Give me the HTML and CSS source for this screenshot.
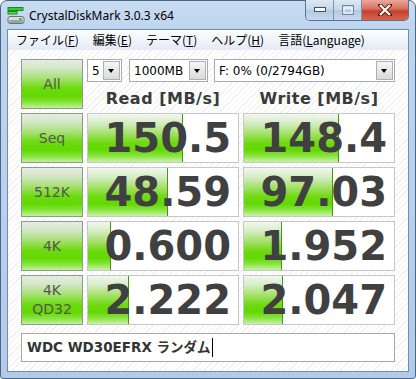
FILE: index.html
```html
<!DOCTYPE html>
<html lang="ja">
<head>
  <meta charset="UTF-8">
  <title>CrystalDiskMark 3.0.3 x64</title>
  <link rel="stylesheet" href="styles.css">
</head>
<body>
  <div class="window">

    <!-- Title bar -->
    <div class="titlebar">
      <svg class="app-icon" width="18" height="18" viewBox="0 0 18 18">
        <rect x="1" y="0.5" width="15" height="3" fill="#3cc83c" stroke="#1e8a1e" stroke-width="1"/>
        <rect x="1" y="4.5" width="9" height="2.5" fill="#58d858" stroke="#1e8a1e" stroke-width="1"/>
        <rect x="1" y="9.5" width="16" height="7" rx="2" fill="#d8dcde" stroke="#6a7378" stroke-width="1"/>
        <rect x="2" y="13" width="14" height="3" rx="1" fill="#9aa3a8"/>
        <rect x="12" y="11" width="3" height="2" fill="#3ad03a"/>
      </svg>
      <div class="title">CrystalDiskMark 3.0.3 x64</div>
      <div class="caption-btns">
        <div class="cap-btn">
          <svg width="12" height="6" viewBox="0 0 12 6"><rect x="0.5" y="0.5" width="11" height="4" fill="#fff" stroke="#39506e"/></svg>
        </div>
        <div class="cap-btn">
          <svg width="12" height="10" viewBox="0 0 12 10"><rect x="0.5" y="0.5" width="11" height="9" fill="none" stroke="#6f87a3"/><rect x="2" y="3" width="8" height="5" fill="none" stroke="#fff"/></svg>
        </div>
        <div class="cap-btn close">
          <svg width="14" height="12" viewBox="0 0 14 12"><path d="M2 1 L12 11 M12 1 L2 11" stroke="#5a1a12" stroke-width="4" stroke-linecap="square"/><path d="M2 1 L12 11 M12 1 L2 11" stroke="#fff" stroke-width="2.2"/></svg>
        </div>
      </div>
    </div>

    <div class="client">
      <!-- Menu -->
      <div class="menu">
        <span class="menu-item">ファイル(<u>F</u>)</span>
        <span class="menu-item">編集(<u>E</u>)</span>
        <span class="menu-item">テーマ(<u>T</u>)</span>
        <span class="menu-item">ヘルプ(<u>H</u>)</span>
        <span class="menu-item">言語(<u>L</u>anguage)</span>
      </div>

      <div class="content">
        <div class="grid">
          <div class="btn">All</div>
          <div class="top">
            <div class="combos">
              <div class="combo w-count"><span>5</span><i class="arrow"></i></div>
              <div class="combo w-size"><span>1000MB</span><i class="arrow"></i></div>
              <div class="combo w-drive"><span>F: 0% (0/2794GB)</span><i class="arrow"></i></div>
            </div>
            <div class="heads">
              <div class="head">Read [MB/s]</div>
              <div class="head">Write [MB/s]</div>
            </div>
          </div>

          <div class="btn">Seq</div>
          <div class="val"><div class="bar" style="width:63%"></div><span>150.5</span></div>
          <div class="val"><div class="bar" style="width:63%"></div><span>148.4</span></div>

          <div class="btn">512K</div>
          <div class="val"><div class="bar" style="width:53%"></div><span>48.59</span></div>
          <div class="val"><div class="bar" style="width:59%"></div><span>97.03</span></div>

          <div class="btn">4K</div>
          <div class="val"><div class="bar" style="width:15%"></div><span>0.600</span></div>
          <div class="val"><div class="bar" style="width:25%"></div><span>1.952</span></div>

          <div class="btn two-line">4K<br>QD32</div>
          <div class="val"><div class="bar" style="width:27%"></div><span>2.222</span></div>
          <div class="val"><div class="bar" style="width:26%"></div><span>2.047</span></div>
        </div>

        <div class="comment">WDC WD30EFRX ランダム<span class="caret"></span></div>
      </div>
    </div>

  </div>
</body>
</html>
```

FILE: styles.css
```css
* {
  box-sizing: border-box;
}

body {
  margin: 0;
  background: #fff;
  font-family: "DejaVu Sans", "Noto Sans CJK JP", sans-serif;
}

.window {
  width: 416px;
  height: 379px;
  border: 1px solid #4a6788;
  border-radius: 7px 7px 3px 3px;
  background: linear-gradient(to bottom, #c9ddf1 0, #bed5ee 28px, #b2cbe8 100%);
  padding: 0 6px 6px;
  display: flex;
  flex-direction: column;
}

/* Title bar */
.titlebar {
  height: 28px;
  display: flex;
  align-items: flex-start;
}

.app-icon {
  margin-top: 6px;
}

.title {
  margin: 7px 0 0 4px;
  font-family: "Noto Sans", sans-serif;
  font-size: 12px;
  line-height: 16px;
  color: #000;
}

.caption-btns {
  margin-left: auto;
  margin-top: -1px;
  display: flex;
  border: 1px solid #5a7392;
  border-top: none;
  border-radius: 0 0 5px 5px;
  overflow: hidden;
}

.cap-btn {
  width: 28px;
  height: 20px;
  display: flex;
  align-items: center;
  justify-content: center;
  background: linear-gradient(to bottom, #dce7f3 0, #c5d6ea 50%, #b4c8e0 51%, #c7d9ed 100%);
  border-right: 1px solid #7a92b0;
}

.cap-btn.close {
  width: 46px;
  border-right: none;
  background: linear-gradient(to bottom, #e9a99c 0, #d8705e 45%, #c5402c 55%, #d4664c 100%);
}

/* Client area */
.client {
  flex: 1;
  border: 1px solid #6f8db3;
  background: repeating-linear-gradient(135deg, #fff 0 3px, #f1f1f1 3px 4px);
  display: flex;
  flex-direction: column;
}

.menu {
  height: 20px;
  display: flex;
  padding-left: 1px;
  background: linear-gradient(to bottom, #fbfcfe 0, #eef3f9 60%, #e2eaf4 100%);
  font-family: "Noto Sans CJK JP", sans-serif;
  font-size: 12px;
  line-height: 20px;
  color: #000;
}

.menu-item {
  padding: 0 7px;
}

.content {
  padding: 9px 0 0 13px;
}

.grid {
  display: grid;
  grid-template-columns: 62px 152px 152px;
  grid-auto-rows: 50px;
  gap: 4px;
}

.btn {
  border: 1px solid #8e9a8e;
  background: linear-gradient(to bottom, #e6ece2 0, #d2e6c4 18%, #a2e06a 40%, #6fda12 58%, #62d800 75%, #86e43c 88%, #c2f09c 100%);
  display: flex;
  align-items: center;
  justify-content: center;
  text-align: center;
  font-size: 14px;
  color: #555;
}

.btn.two-line {
  line-height: 19px;
}

.top {
  grid-column: 2 / 4;
  display: flex;
  flex-direction: column;
  justify-content: space-between;
}

.combos {
  display: flex;
  gap: 7px;
}

.combo {
  height: 23px;
  border: 1px solid #a4abb4;
  background: #fff;
  display: flex;
  align-items: center;
  justify-content: space-between;
  font-size: 12px;
  color: #000;
  padding: 0 1px 0 4px;
}

.w-count { width: 35px; }
.w-size { width: 79px; }
.w-drive { width: 181px; margin-left: -1px; }

.arrow {
  width: 17px;
  height: 19px;
  border: 1px solid #b0b0b0;
  background: linear-gradient(to bottom, #f6f6f6, #dadada);
  position: relative;
}

.arrow::after {
  content: "";
  position: absolute;
  left: 4px;
  top: 7px;
  border-left: 3.5px solid transparent;
  border-right: 3.5px solid transparent;
  border-top: 4px solid #000;
}

.heads {
  display: grid;
  grid-template-columns: 152px 152px;
  gap: 4px;
}

.head {
  text-align: center;
  font-size: 16px;
  font-weight: bold;
  letter-spacing: 0.5px;
  line-height: 20px;
  color: #3a3a3a;
}

.val {
  position: relative;
  border: 1px solid #c7c7c7;
  background: #fff;
  text-align: right;
  padding-right: 7px;
}

.bar {
  position: absolute;
  left: 0;
  top: 0;
  bottom: 0;
  border-right: 1px solid #3d9a12;
  background: linear-gradient(to bottom, #f2f7ef 0, #d4ecc2 20%, #a0e062 42%, #6ed912 60%, #62d800 74%, #86e43c 87%, #c8f2a8 100%);
}

.val span {
  position: relative;
  font-size: 40px;
  font-weight: bold;
  line-height: 48px;
  color: #404040;
}

.comment {
  margin-top: 8px;
  width: 374px;
  height: 29px;
  border: 1px solid #a8a8a8;
  background: #fff;
  padding-left: 5px;
  font-size: 13.5px;
  font-weight: bold;
  line-height: 27px;
  color: #333;
  display: flex;
  align-items: center;
}

.caret {
  display: inline-block;
  width: 1px;
  height: 19px;
  margin-left: 1px;
  background: #000;
}
```
